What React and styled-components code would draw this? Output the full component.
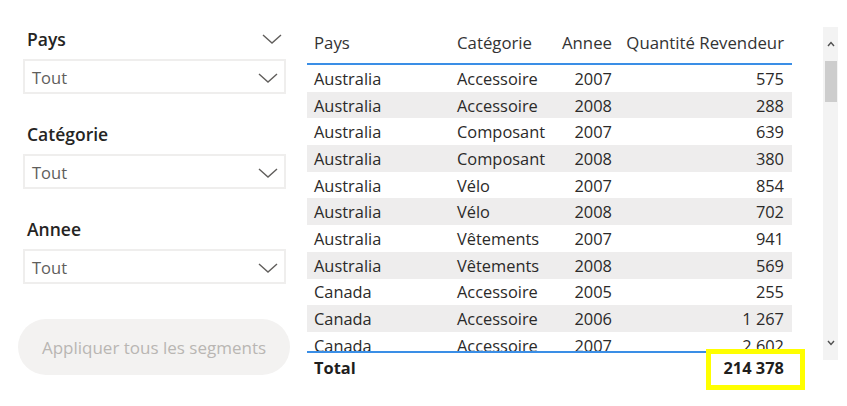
import React from 'react';
import styled, { createGlobalStyle } from 'styled-components';

const GlobalStyle = createGlobalStyle`
  html, body {
    margin: 0;
    padding: 0;
    background: #ffffff;
  }
  body {
    font-family: "Open Sans", "Noto Sans", sans-serif;
  }
`;

const Page = styled.div`
  width: 847px;
  height: 406px;
  display: flex;
  background: #ffffff;
  position: relative;
  overflow: hidden;
`;

const Filters = styled.div`
  width: 307px;
  flex-shrink: 0;
  box-sizing: border-box;
  padding: 27px 0 0 18px;
  display: flex;
  flex-direction: column;
`;

const Slicer = styled.div`
  display: flex;
  flex-direction: column;
  margin-bottom: 28px;
  padding-left: 5px;
  width: 263px;
`;

const SlicerHeader = styled.div`
  height: 24px;
  display: flex;
  align-items: center;
  justify-content: space-between;
  padding: 0 4px 0 4px;
  margin-bottom: 8px;
  font-size: 17.5px;
  font-weight: 600;
  color: #252423;
`;

const Dropdown = styled.div`
  height: 35px;
  box-sizing: border-box;
  border: 2px solid #efeeed;
  display: flex;
  align-items: center;
  justify-content: space-between;
  padding: 2px 6px 0 7px;
  font-size: 16.5px;
  color: #605e5c;
`;

const ApplyButton = styled.div`
  margin-top: 7px;
  width: 272px;
  height: 56px;
  border-radius: 28px;
  background: #f3f2f1;
  color: #b9b6b3;
  font-size: 17px;
  display: flex;
  align-items: center;
  justify-content: center;
`;

const TableArea = styled.div`
  display: flex;
  padding-top: 27px;
`;

const Table = styled.div`
  width: 485px;
  flex-shrink: 0;
  display: flex;
  flex-direction: column;
  color: #2b2a29;
  font-size: 16.4px;
`;

const Row = styled.div`
  display: grid;
  grid-template-columns: 143px 105px 65px 1fr;
  height: 26.7px;
  align-items: center;
  background: ${p => (p.$shade ? '#eeeded' : 'transparent')};
  flex-shrink: 0;
`;

const HeaderRow = styled(Row)`
  height: 36px;
  align-items: start;
  line-height: 31px;
  border-bottom: 2px solid #3a8ee6;
  color: #333;
  font-size: 16.8px;
`;

const Cell = styled.div`
  padding: 0 ${p => (p.$right ? '8px' : '0')} 0 ${p => (p.$right ? '0' : '7px')};
  text-align: ${p => (p.$right ? 'right' : 'left')};
  white-space: nowrap;
  line-height: inherit;
`;

const Body = styled.div`
  height: 286px;
  overflow: hidden;
  border-bottom: 2px solid #3a8ee6;
`;

const TotalRow = styled(Row)`
  height: 28px;
  font-weight: 700;
  color: #1f1e1d;
`;

const ScrollBar = styled.div`
  margin-left: 31px;
  width: 15px;
  height: 333px;
  background: #f3f3f3;
  display: flex;
  flex-direction: column;
  align-items: center;
`;

const ScrollArrow = styled.div`
  height: 34px;
  display: flex;
  align-items: center;
  justify-content: center;
`;

const Thumb = styled.div`
  width: 12px;
  height: 41px;
  background: #cdcdcd;
`;

const Spacer = styled.div`
  flex: 1;
`;

const Highlight = styled.div`
  position: absolute;
  left: 706px;
  top: 349px;
  width: 99px;
  height: 41px;
  box-sizing: border-box;
  border: 5px solid #ffff00;
`;

const Chevron = ({ w = 20, color = '#605e5c' }) => (
  <svg width={w} height="10" viewBox="0 0 20 10" fill="none">
    <path d="M1 1 L10 9 L19 1" stroke={color} strokeWidth="1.4" />
  </svg>
);

const SmallChevron = ({ up }) => (
  <svg width="8" height="6" viewBox="0 0 8 6" fill="none">
    <path d={up ? 'M1 5 L4 1.5 L7 5' : 'M1 1 L4 4.5 L7 1'} stroke="#505050" strokeWidth="1.4" />
  </svg>
);

const rows = [
  ['Australia', 'Accessoire', '2007', '575'],
  ['Australia', 'Accessoire', '2008', '288'],
  ['Australia', 'Composant', '2007', '639'],
  ['Australia', 'Composant', '2008', '380'],
  ['Australia', 'Vélo', '2007', '854'],
  ['Australia', 'Vélo', '2008', '702'],
  ['Australia', 'Vêtements', '2007', '941'],
  ['Australia', 'Vêtements', '2008', '569'],
  ['Canada', 'Accessoire', '2005', '255'],
  ['Canada', 'Accessoire', '2006', '1 267'],
  ['Canada', 'Accessoire', '2007', '2 602'],
  ['Canada', 'Accessoire', '2008', '1 958'],
];

const slicers = ['Pays', 'Catégorie', 'Annee'];

const App = () => (
  <Page>
    <GlobalStyle />
    <Filters>
      {slicers.map((name, i) => (
        <Slicer key={name}>
          <SlicerHeader>
            <span>{name}</span>
            {i === 0 && <Chevron />}
          </SlicerHeader>
          <Dropdown>
            <span>Tout</span>
            <Chevron />
          </Dropdown>
        </Slicer>
      ))}
      <ApplyButton>Appliquer tous les segments</ApplyButton>
    </Filters>
    <TableArea>
      <Table>
        <HeaderRow>
          <Cell>Pays</Cell>
          <Cell>Catégorie</Cell>
          <Cell $right>Annee</Cell>
          <Cell $right>Quantité Revendeur</Cell>
        </HeaderRow>
        <Body>
          {rows.map((r, i) => (
            <Row key={i} $shade={i % 2 === 1}>
              <Cell>{r[0]}</Cell>
              <Cell>{r[1]}</Cell>
              <Cell $right>{r[2]}</Cell>
              <Cell $right>{r[3]}</Cell>
            </Row>
          ))}
        </Body>
        <TotalRow>
          <Cell>Total</Cell>
          <Cell />
          <Cell />
          <Cell $right>214 378</Cell>
        </TotalRow>
      </Table>
      <ScrollBar>
        <ScrollArrow>
          <SmallChevron up />
        </ScrollArrow>
        <Thumb />
        <Spacer />
        <ScrollArrow>
          <SmallChevron />
        </ScrollArrow>
      </ScrollBar>
    </TableArea>
    <Highlight />
  </Page>
);

export default App;
